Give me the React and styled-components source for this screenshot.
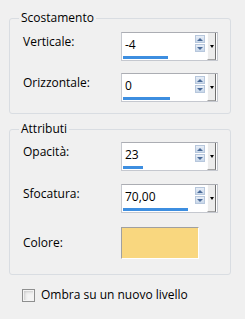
import React from 'react';
import styled, { createGlobalStyle } from 'styled-components';

const GlobalStyle = createGlobalStyle`
    html, body {
        margin: 0;
        padding: 0;
        background: #f0f0f0;
    }

    body {
        font-family: "Open Sans", "Noto Sans", sans-serif;
        font-size: 12px;
        color: #000;
    }
`;

const Panel = styled.div`
    width: 245px;
    height: 319px;
    box-sizing: border-box;
    padding: 10px 0 0 9px;
    display: flex;
    flex-direction: column;
    gap: 7px;
`;

const Group = styled.fieldset`
    width: 222px;
    box-sizing: border-box;
    margin: 0;
    padding: ${props => props.$top}px 12px ${props => props.$bottom}px 13px;
    border: 1px solid #d9dde2;
    border-radius: 3px;
    display: flex;
    flex-direction: column;
    gap: ${props => props.$gap}px;
`;

const Legend = styled.legend`
    margin-left: -4px;
    padding: 0 2px;
    line-height: 16px;
`;

const Row = styled.div`
    display: flex;
    align-items: ${props => (props.$center ? 'center' : 'flex-start')};
    margin-top: ${props => props.$offset || 0}px;
`;

const Label = styled.span`
    width: 98px;
    flex: none;
    line-height: 16px;
    padding-top: ${props => (props.$center ? 0 : 2)}px;
`;

const Spin = styled.div`
    width: 97px;
    height: 29px;
    box-sizing: border-box;
    border: 1px solid #c5c8cf;
    border-top-color: #abadb3;
    background: #fff;
    display: flex;
`;

const ValueArea = styled.div`
    flex: 1;
    display: flex;
    flex-direction: column;
    padding-left: 1px;
`;

const Value = styled.span`
    margin: 4px 0 0 2px;
    line-height: 16px;
`;

const Bar = styled.div`
    margin-top: auto;
    margin-bottom: 1px;
    height: 3px;
    width: ${props => props.$fill}px;
    background: #3d8ee0;
`;

const Arrows = styled.div`
    width: 10px;
    padding-top: 2px;
    margin-right: 2px;
    display: flex;
    flex-direction: column;
    gap: 1px;
`;

const ArrowButton = styled.div`
    height: 8px;
    box-sizing: border-box;
    border: 1px solid #b7c7dc;
    background: linear-gradient(#e8eef7, #c9d8ea);
    display: flex;
    align-items: center;
    justify-content: center;

    &:after {
        content: '';
        border-left: 3px solid transparent;
        border-right: 3px solid transparent;
        ${props => (props.$down
            ? 'border-top: 3px solid #4a6a98;'
            : 'border-bottom: 3px solid #4a6a98;')}
    }
`;

const DropButton = styled.div`
    width: 9px;
    margin-right: 1px;
    box-sizing: border-box;
    background: #ececec;
    border-left: 1px solid #fdfdfd;
    border-right: 1px solid #6f6f6f;
    border-bottom: 1px solid #a3a3a3;
    display: flex;
    align-items: center;
    justify-content: center;

    &:after {
        content: '';
        border-left: 2.5px solid transparent;
        border-right: 2.5px solid transparent;
        border-top: 3px solid #000;
    }
`;

const Swatch = styled.div`
    width: 78px;
    height: 32px;
    box-sizing: border-box;
    background: ${props => props.$color};
    border: 1px solid #fff;
    border-top-color: #a0a0a0;
    border-left-color: #a0a0a0;
`;

const CheckRow = styled.label`
    display: flex;
    align-items: center;
    gap: 6px;
    margin: 5px 0 0 13px;
    line-height: 16px;
`;

const CheckBox = styled.span`
    width: 13px;
    height: 13px;
    box-sizing: border-box;
    border: 1px solid #8e8f8f;
    background: #f4f4f4;
    box-shadow: inset 0 0 0 1px #f4f4f4, inset 2px 2px 3px #c9c9c9;
`;

const SpinBox = ({ value, fill }) => (
    <Spin>
        <ValueArea>
            <Value>{value}</Value>
            <Bar $fill={fill} />
        </ValueArea>
        <Arrows>
            <ArrowButton />
            <ArrowButton $down />
        </Arrows>
        <DropButton />
    </Spin>
);

export default function App() {
    return (
        <>
            <GlobalStyle />
            <Panel>
                <Group $top={6} $bottom={11} $gap={12}>
                    <Legend>Scostamento</Legend>
                    <Row>
                        <Label>Verticale:</Label>
                        <SpinBox value="-4" fill={45} />
                    </Row>
                    <Row>
                        <Label>Orizzontale:</Label>
                        <SpinBox value="0" fill={47} />
                    </Row>
                </Group>
                <Group $top={5} $bottom={15} $gap={13}>
                    <Legend>Attributi</Legend>
                    <Row>
                        <Label>Opacità:</Label>
                        <SpinBox value="23" fill={20} />
                    </Row>
                    <Row>
                        <Label>Sfocatura:</Label>
                        <SpinBox value="70,00" fill={65} />
                    </Row>
                    <Row $center $offset={1}>
                        <Label $center>Colore:</Label>
                        <Swatch $color="#f9d77f" />
                    </Row>
                </Group>
                <CheckRow>
                    <CheckBox />
                    Ombra su un nuovo livello
                </CheckRow>
            </Panel>
        </>
    );
}
